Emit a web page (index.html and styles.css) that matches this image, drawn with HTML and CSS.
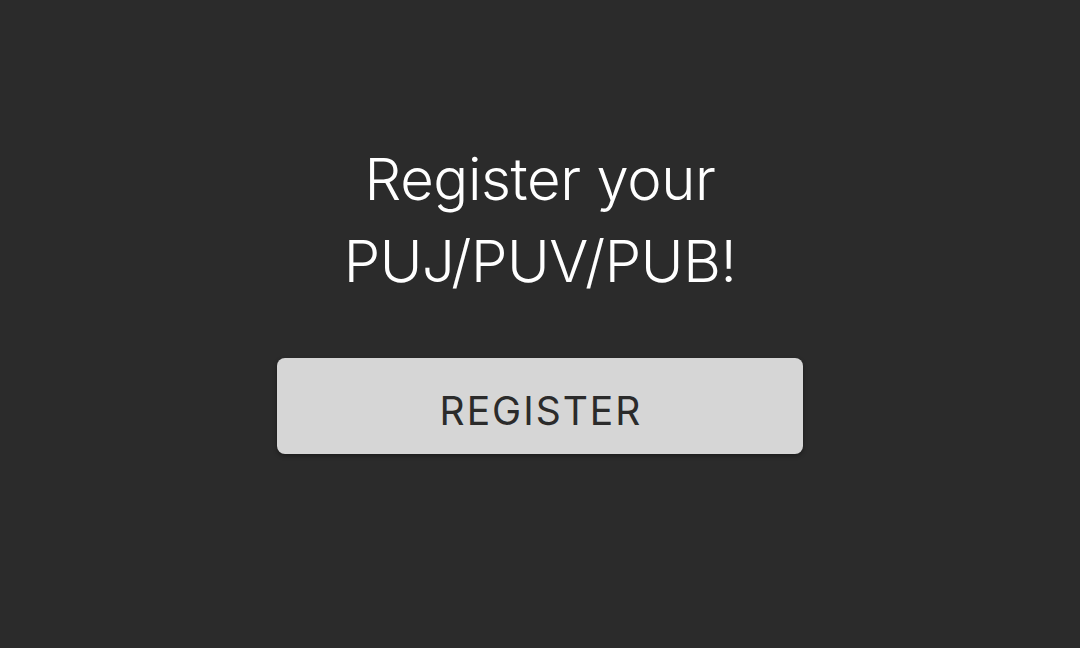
FILE: index.html
```html
<!DOCTYPE html>
<html>
<head>
<meta charset="utf-8">
<link rel="stylesheet" href="styles.css">
</head>
<body>
<main class="page">
  <h1 class="title">Register your<br>PUJ/PUV/PUB!</h1>
  <button class="register-btn">REGISTER</button>
</main>
</body>
</html>
```

FILE: styles.css
```css
html, body {
  margin: 0;
  padding: 0;
  background: #2b2b2b;
}
.page {
  width: 1080px;
  height: 648px;
  display: flex;
  flex-direction: column;
  align-items: center;
  padding-top: 138px;
  box-sizing: border-box;
  font-family: Inter, "Noto Sans", sans-serif;
}
.title {
  margin: 0;
  color: #ffffff;
  font-weight: 300;
  font-size: 58px;
  line-height: 82px;
  text-align: center;
  letter-spacing: -0.4px;
}
.register-btn {
  margin-top: 56px;
  width: 526px;
  height: 96px;
  border: none;
  border-radius: 8px;
  background: #d6d6d6;
  color: #2b2b2b;
  font-family: Inter, "Noto Sans", sans-serif;
  font-size: 39px;
  font-weight: 400;
  letter-spacing: 2px;
  box-shadow: 0 2px 4px rgba(0,0,0,0.35);
  padding: 9px 0 0 2px;
  box-sizing: border-box;
}
```
